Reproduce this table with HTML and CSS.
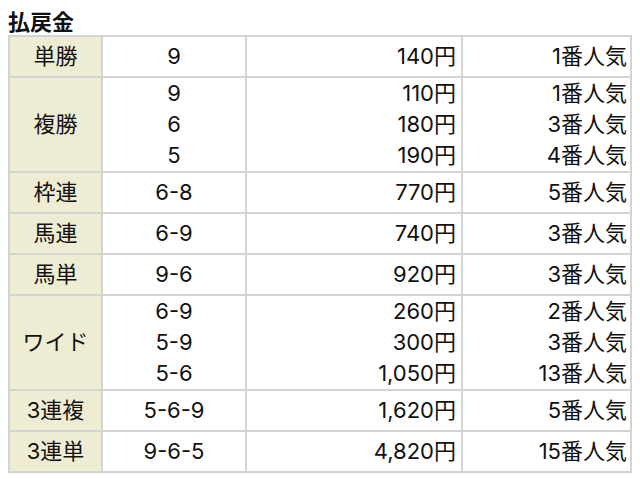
FILE: index.html
```html
<!DOCTYPE html>
<html lang="ja">
<head>
<meta charset="utf-8">
<link rel="stylesheet" href="styles.css">
</head>
<body>
<h2 class="title">払戻金</h2>
<table class="pay">
  <tr><th>単勝</th><td class="num">9</td><td class="yen">140円</td><td class="pop">1番人気</td></tr>
  <tr class="multi"><th>複勝</th><td class="num">9<br>6<br>5</td><td class="yen">110円<br>180円<br>190円</td><td class="pop">1番人気<br>3番人気<br>4番人気</td></tr>
  <tr><th>枠連</th><td class="num">6-8</td><td class="yen">770円</td><td class="pop">5番人気</td></tr>
  <tr><th>馬連</th><td class="num">6-9</td><td class="yen">740円</td><td class="pop">3番人気</td></tr>
  <tr><th>馬単</th><td class="num">9-6</td><td class="yen">920円</td><td class="pop">3番人気</td></tr>
  <tr class="multi"><th>ワイド</th><td class="num">6-9<br>5-9<br>5-6</td><td class="yen">260円<br>300円<br>1,050円</td><td class="pop">2番人気<br>3番人気<br>13番人気</td></tr>
  <tr><th>3連複</th><td class="num">5-6-9</td><td class="yen">1,620円</td><td class="pop">5番人気</td></tr>
  <tr><th>3連単</th><td class="num">9-6-5</td><td class="yen">4,820円</td><td class="pop">15番人気</td></tr>
</table>
</body>
</html>
```
FILE: styles.css
```css
body {
  margin: 8px;
  background: #fff;
  color: #111;
  font-family: "Inter", "Noto Sans CJK JP", sans-serif;
}
.title {
  margin: 0;
  height: 27px;
  font-size: 22px;
  line-height: 29px;
  font-weight: bold;
}
.pay {
  width: 624px;
  border-collapse: collapse;
  font-size: 22px;
}
.pay th, .pay td {
  border: 2px solid #d3d3d3;
  line-height: 31px;
  padding: 4px 5px;
  font-weight: normal;
  white-space: nowrap;
}
.pay tr.multi th, .pay tr.multi td {
  padding-top: 0;
  padding-bottom: 0;
}
.pay th {
  width: 81px;
  background: #eeedd4;
  text-align: center;
}
.pay .num { width: 132px; text-align: center; }
.pay .yen { width: 204px; text-align: right; }
.pay .pop { text-align: right; padding-right: 3px; }
```
